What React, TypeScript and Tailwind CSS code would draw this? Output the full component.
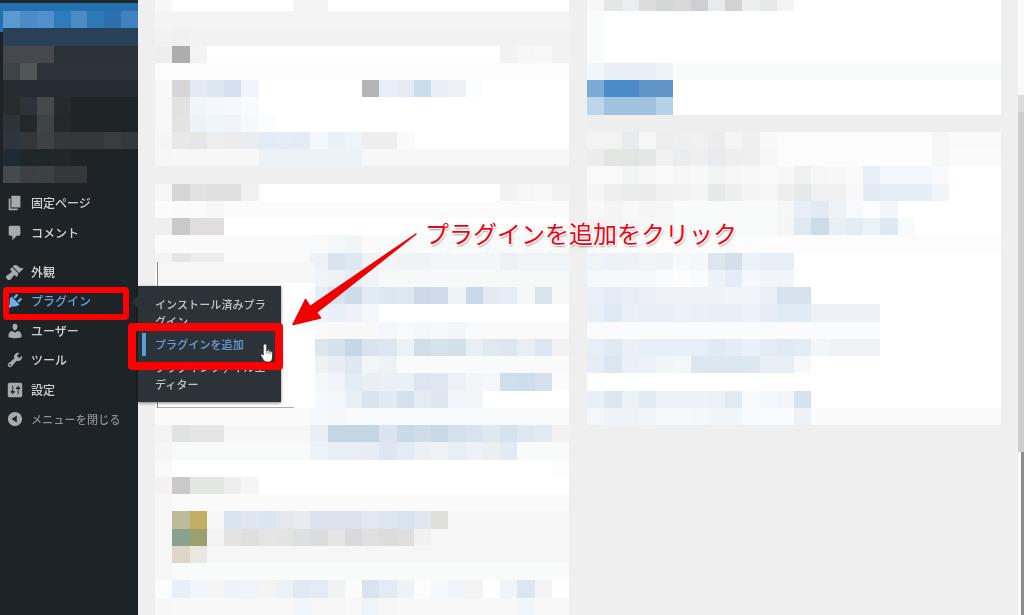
const sideTop: { cells: string[]; fill: string }[] = [
  { cells: ["#5b9ad0", "#4a8cc8", "#5090cc", "#2d7dbd", "#4c8cc4", "#2f78b6", "#2a70b0", "#3f82bf"], fill: "#2271b1" },
  { cells: [], fill: "#2a4056" },
  { cells: ["#45494e", "#45494e", "#45494e"], fill: "#2c3338" },
  { cells: ["#3d4447", "#505557"], fill: "#2d3439" },
  { cells: [], fill: "#252c32" },
  { cells: ["#282c2e", "#2d3339", "#45494b", "#262a2c"], fill: "#1f2427" },
  { cells: ["#2c3339", "#23282a", "#3e4446", "#26292b"], fill: "#1f2427" },
  { cells: ["#2e353c", "#33373a", "#3f4144", "#34383b", "#34383b", "#34383b", "#3a3d40", "#35393c"], fill: "#1d2327" },
  { cells: ["#1f2a33", "#202629", "#202629", "#202629"], fill: "#1d2327" },
  { cells: ["#454a4f", "#3c3f43", "#3c4143", "#34383b", "#34383b"], fill: "#1d2327" },
];

const leftRows: { cells: string[]; fill: string }[] = [
  { cells: ["#f5f8f6", "#fff", "#fff", "#fff", "#fff", "#fff", "#fff", "#fff", "#f4f4f4", "#f4f4f4"], fill: "#fff" },
  { cells: [], fill: "#f4f4f4" },
  { cells: ["#f2f2f2", "#f0f0f0"], fill: "#f2f2f2" },
  { cells: ["#eeeeee", "#adadad", "#f3f3f3", ...Array(17).fill("#fff"), "#f2f2f2", "#f6f6f6", "#f8f8f8", "#f2f2f2"], fill: "#fff" },
  { cells: [], fill: "#fcfcfc" },
  { cells: ["#f8f8f8", "#d5d5d5", "#e2ebf4", "#dce7f1", "#d3e0ee", "#f0f4fa", "#fff", "#fff", "#fff", "#fff", "#fff", "#fff", "#b4b4b6", "#e9eef6", "#e4ebf4", "#cddcea", "#e8eff6", "#eef1f6", "#fbfcfd"], fill: "#fff" },
  { cells: ["#f8f8f8", "#e2e2e2", "#eff5f9", "#f4f8fc", "#f6f9fc", "#f8fafc"], fill: "#fff" },
  { cells: ["#f8f8f8", "#e3e3e3", "#edf2f8", "#eff5f8", "#f0f4f9", "#f5f8fc", "#fbfcfe"], fill: "#fff" },
  { cells: ["#f5f5f5", "#e8e8e8", "#e6e6e6", "#eeeeee", "#ececec", "#ebecef", "#e3ebf4", "#e5ecf5", "#e5ebf4", "#f4f8fc", "#ebeff6", "#f0f3f8", "#eeeeee", "#eeeeee", "#fafafa"], fill: "#fff" },
  { cells: ["#f6f6f6", "#f7f7f7", "#f7f7f7", "#f7f7f7", "#f7f7f7", "#f7f7f7", "#ecf2f6", "#ecf2f6", "#ecf2f6", "#ecf2f6", "#ecf2f6", "#ecf2f6"], fill: "#f7f7f7" },
  { cells: [], fill: "#efefef" },
  { cells: ["#f6f6f6", "#d6d6d6", "#e2e2e2", "#e0e0e0", "#e0e0e0", "#f0f0f0", ...Array(14).fill("#fff"), "#f2f2f2", "#f6f6f6", "#f8f8f8", "#f2f2f2"], fill: "#fff" },
  { cells: ["#fbfbfb", "#f9fbfa", "#fbfbfb", "#f6f6f6"], fill: "#fbfbfb" },
  { cells: ["#f1eeef", "#c9c9c9", "#dfdddd", "#dfdddd"], fill: "#fff" },
  { cells: ["#fafafa", "#fafafa", "#fafafa", "#fafafa", "#fafafa", "#fafafa", "#fafafa", "#fafafa", "#fafafa", "#f8f9fa", "#f5f8fa", "#f1f5f9"], fill: "#f9fafa" },
  { cells: ["#f3f3f3", "#e5e5e5", "#ececec", "#ececec", "#fafafa", "#fafafa", "#fafafa", "#fafafa", "#fafafa", "#eef2f5", "#d9e4ee", "#dfe7f0", "#eef2f6", "#f2f5f8", "#eef3f6", "#eef3f6", "#f3f6f8", "#f3f6f8", "#f3f6f8", "#f3f6f8", "#ecf1f5"], fill: "#f1f4f7" },
  { cells: [...Array(9).fill("#fff"), "#f1f4f7", "#eef2f7", "#e8eef5", "#f0f4f8"], fill: "#f7f9f9" },
  { cells: [...Array(9).fill("#fff"), "#e6edf4", "#d9e4ee", "#cedcea", "#e2eaf3", "#dde7f1", "#dfe8f1", "#ccdae8", "#cedbe9", "#edf3f7", "#c8d9e9", "#e2eaf3", "#e6edf5", "#f4f7fa", "#d8e3ee", "#f8f8f8"], fill: "#fff" },
  { cells: [...Array(9).fill("#fff"), "#eef3f8", "#e9eff7", "#eef2f8", "#f5f7fb"], fill: "#fff" },
  { cells: [...Array(9).fill("#fff"), "#fafafa", "#f8f8f8", "#f8f8f8", "#f8f8f8", "#f4f7fa", "#f7f9fb", "#f5f6f8", "#f7f8f9", "#f3f6f9", "#f9fafb"], fill: "#fafafa" },
  { cells: [...Array(9).fill("#fff"), "#dfe5ec", "#d6e1ec", "#c5d6e7", "#d9e3ee", "#dde6ef", "#ecf1f5", "#d0dee9", "#d6e2ec", "#d3dfea", "#e9eef2", "#e1e8f0", "#dde6ef", "#e9eef5", "#dde6f0", "#f2f2f2"], fill: "#fff" },
  { cells: [...Array(9).fill("#fff"), "#eef1f4", "#e8edf3", "#dfe8f0", "#f2f6f7", "#edf2f7"], fill: "#f9fafa" },
  { cells: [...Array(9).fill("#fff"), "#f4f8fb", "#f0f4f8", "#e3ebf3", "#e9eff5", "#eaf0f5", "#eaf0f5", "#dde6f0", "#dfe7f0", "#edf1f6", "#f3f5f9", "#f4f6f9", "#cfdeeb", "#cedded", "#d5e1ed", "#fbfbfb"], fill: "#fff" },
  { cells: [...Array(9).fill("#fff"), "#f6f9fc", "#f3f6fa", "#e8eff5", "#d8e4ee", "#e1eaf2", "#d5e1ed", "#e4ebf3", "#dee7f0", "#f2f5f9", "#f3f5f8"], fill: "#fff" },
  { cells: ["#fafafa", "#fafafa", "#fafafa", "#fafafa", "#fafafa", "#fafafa", "#fafafa", "#fafafa", "#fafafa", "#f6f8f9", "#f5f7f9"], fill: "#f9fafb" },
  { cells: ["#f3f3f3", "#e1e2e3", "#e5e5e5", "#e5e5e5", "#f7f7f7", "#f7f7f7", "#f7f7f7", "#f7f7f7", "#f7f7f7", "#e9eff3", "#c4d5e4", "#c4d5e4", "#c4d5e4", "#d9e4f0", "#c8d9e8", "#cfdde8", "#c7d8e7", "#d5e0ec", "#d7e3ee", "#dfe7ef", "#d8e2ee", "#dfe7f2", "#e3eaf1", "#f2f2f2"], fill: "#fff" },
  { cells: ["#f5f5f5", "#f8fafa", "#f8fafa", "#f8fafa", "#f8fafa", "#f8fafa", "#f8fafa", "#f8fafa", "#f8fafa", "#eef3f7", "#e8eef3", "#e9eef3", "#e8edf3", "#dde6f2", "#e4ebf4", "#ecf0f5", "#f0f2f5", "#e8eef6", "#edf1f5", "#ebeff2", "#e2eaf3"], fill: "#f9fafa" },
  { cells: ["#f8faf9", ...Array(22).fill("#fff"), "#fcfcfc"], fill: "#fff" },
  { cells: ["#f3f1f1", "#c9c9ca", "#e4e6e4", "#e4e6e4", "#eeeeee", "#f5f5f5"], fill: "#fff" },
  { cells: ["#f6f6f6"], fill: "#fafafa" },
  { cells: ["#f6f6f6", "#bcbb9a", "#c1b064", "#f6f6f6", "#d7e3ee", "#dfe6f1", "#dbe5f1", "#e3e8ec", "#e8ebef", "#dae3ee", "#dae3ee", "#dae3ee", "#e2e8f2", "#dde5f0", "#d7e3ee", "#e0e7ee", "#dfe0da"], fill: "#f6f6f6" },
  { cells: ["#f6f6f6", "#8aa18f", "#9da06e", "#f3f3f3", "#e3e4e2", "#dfdfe0", "#e3e4e3", "#e3e4e2", "#dedfe0", "#dcdcdd", "#e5e5e5", "#dadadc", "#e0e0e1", "#dcdcdd", "#dedede", "#f1f1f1"], fill: "#f6f6f6" },
  { cells: ["#f6f6f6", "#dfd5c9", "#e9e8e3"], fill: "#f6f6f6" },
  { cells: ["#f6f6f6"], fill: "#f9fafa" },
  { cells: ["#fbfcfc", "#e9eef8", "#f2f5fa", "#f5f5f5", "#eff3f7", "#f0f4f9", "#f4f4f4", "#ecf1f5", "#e1e9f2", "#e4ebf5", "#f1f3f3", "#fbfbfb", "#d9e4ef", "#e3ebf5", "#edf2f4", "#fcfcfc", "#f6f9fb", "#f1f4f8", "#f3f3f3", "#fefefe", "#f0f4f9", "#dce6f0", "#f4f4f4", "#fefefe"], fill: "#fff" },
  { cells: ["#f7f7f7", "#f8f8f8", "#f8f8f8", "#f8f8f8", "#f8f8f8", "#f8f8f8", "#f8f8f8", "#f8f8f8", "#f2f6fa", "#f6f6f6", "#f6f6f6", "#f8f8f8", "#eff4f8", "#f6f6f6", "#f8f8f8", "#f8f8f8", "#f8f8f8", "#f8f8f8", "#f8f8f8", "#f8f8f8", "#f8f8f8", "#f1f6fa"], fill: "#f8f8f8" },
];

const rightRows: { cells: string[]; fill: string }[] = [
  { cells: ["#f7f7f7", "#e5e7e6", "#ecedee", "#dcdcdc", "#d4d6d6", "#d8d8d8", "#cdcfd0", "#e9eaeb", "#d3d3d3", "#edeeef", "#e6e8e7", "#f3f3f3"], fill: "#fff" },
  { cells: ["#fafcfb"], fill: "#fff" },
  { cells: ["#fafcfb"], fill: "#fff" },
  { cells: ["#fafcfb"], fill: "#fff" },
  { cells: ["#f2f6fa", "#e9eff4", "#e9eff4", "#e9eff4", "#eff3f7"], fill: "#f9fafa" },
  { cells: ["#7aaad6", "#4a8cc8", "#4a8cc8", "#5f95c8", "#5f95c8"], fill: "#fff" },
  { cells: ["#bdd6ec", "#a0c2de", "#a0c2de", "#a0c2de", "#b3d1e8"], fill: "#fff" },
  { cells: [], fill: "#eeeeee" },
  { cells: ["#f3f3f3", "#f3f3f3", "#e9eaec", "#f6f6f6", "#ededed", "#efefef", "#f0f0f0", "#ececec", "#f5f5f5", "#efefef", "#f8f8f8", ...Array(9).fill("#fcfcfc"), "#f6f6f6"], fill: "#f9f9f9" },
  { cells: ["#ececec", "#e3e5e3", "#e3e5e3", "#e5e6e6", "#f0f0f0", "#eaecee", "#efefef", "#eaebee", "#eeeeee", "#efefef", "#f7f7f7", ...Array(9).fill("#fcfcfc"), "#f6f6f6"], fill: "#fafafa" },
  { cells: ["#f9f9f9", "#f9f9f9", "#f3f5f4", "#f6f6f6", "#fafafa", "#f6f6f6", "#f8f8f8", "#f2f4f3", "#f6f6f6", "#f8f8f8", "#fafafa", "#f7f7f7", "#eff1f0", "#f6f6f6", "#f7f7f7", "#f9f9f9", "#e9eff8", "#f3f7fb", "#f3f7fb", "#f3f7fb", "#f8fafc"], fill: "#fff" },
  { cells: ["#f5f5f5", "#efefef", "#eaecee", "#ebebeb", "#f1f1f1", "#f2f2f2", "#f5f5f5", "#e6e8ea", "#eeeeee", "#f4f4f4", "#f6f6f6", "#eeeeee", "#e6e8ea", "#f0f0f0", "#f0f0f0", "#f8f8f8", "#e2ebf4", "#e5edf6", "#e5edf6", "#e5edf6", "#f0f4f9"], fill: "#fff" },
  { cells: ["#f8f8f8", "#f3f5f4", "#f8f8f8", "#f5f5f5", "#f6f6f6", "#f9fafa", "#f9fafa", "#f9fafa", "#f9fafa", "#f9fafa", "#f9fafa", "#f6f6f6", "#e8eef7", "#e2ebf3", "#eef3f8", "#f7f9fc", "#fcfcfc", "#f2f6fa"], fill: "#fff" },
  { cells: ["#f4f4f4", "#f3f3f3", "#f6f6f6", "#f6f6f6", "#f6f6f6", "#f9fafa", "#f9fafa", "#f9fafa", "#f9fafa", "#f9fafa", "#f9fafa", "#f5f5f5", "#e0e8f1", "#ccdbe8", "#e9eff5", "#e3ebf3", "#edf2f7", "#dde8f2", "#f8fafc"], fill: "#fff" },
  { cells: [], fill: "#fcfcfd" },
  { cells: ["#eff4f7", "#ecf1f7", "#edf2f6", "#f1f4f7", "#f0f3f6", "#f6f8fa", "#f4f7f8", "#dce6ee", "#d3e0eb", "#ecf1f7", "#e8eef6", "#e8eef6"], fill: "#fff" },
  { cells: ["#f6f9fc", "#f6f9fb", "#f6f9fb", "#f6f9fb", "#fafbfd", "#fdfdfe", "#fafbfd", "#edf2f8", "#e6ecf5", "#f4f7fb", "#f1f5f9", "#f1f4f8"], fill: "#fff" },
  { cells: ["#eaf0f7", "#e3ebf4", "#e8eef5", "#ecf0f6", "#eff2f7", "#eff2f7", "#eff2f7", "#eff2f7", "#f1f4f8", "#f0f3f8", "#ebf0f8", "#d6e2ee", "#d6e2ee"], fill: "#fff" },
  { cells: ["#e8eff7", "#dfe9f3", "#ebf0f7", "#e8eef6", "#e8eef6", "#ecf1f7", "#ebf0f7", "#e8eff6", "#e9eff6", "#edf1f8", "#e6edf5", "#e1ebf4", "#e1ebf4", "#eef2f7", "#eef2f7", "#eef2f7", "#eef2f7"], fill: "#fff" },
  { cells: Array(17).fill("#f9fbfd"), fill: "#fff" },
  { cells: ["#e8eef6", "#e1e9f3", "#ebf0f7", "#e8eef6", "#e8eef6", "#e8eef6", "#e7eef7", "#e1e9f2", "#e5ecf3", "#e9f0f7", "#e4ebf3", "#e1e9f3", "#e3ebf3", "#f1f6f8", "#eff3f7", "#eff2f6", "#eff2f6"], fill: "#fff" },
  { cells: ["#e6edf4", "#dce6f1", "#eaf0f7", "#eef2f8", "#f0f4f8", "#f3f7f8", "#dde7f0", "#dde7f0", "#dde7f0", "#dde7f0", "#e9eef5", "#e8eef6", "#f6f9fb"], fill: "#fff" },
  { cells: [], fill: "#fff" },
  { cells: ["#e9eff6", "#dce7f1", "#ecf1f7", "#e2ebf3", "#edf1f7", "#eef2f7", "#eef2f7", "#ecf1f6", "#e2ebf1", "#f8fafc", "#f4f7fb", "#f2f5f9", "#d6e2ef"], fill: "#fff" },
  { cells: ["#f4f6f9", "#eff3f8", "#eff3f8", "#f1f5f8", "#f7f8fa", "#f7f8fa", "#f6f7f9", "#f2f5f8", "#f2f5f8", "#f9fafc", "#fafbfd", "#fafbfd", "#eef2f7"], fill: "#fafafb" },
];

function Mosaic({ rows, cols }: { rows: { cells: string[]; fill: string }[]; cols: number }) {
  return (
    <div className="flex flex-col">
      {rows.map((row, i) => (
        <div key={i} className="flex h-[17.25px]">
          {Array.from({ length: cols }).map((_, c) => (
            <div key={c} className="w-[17.25px] h-full" style={{ background: row.cells[c] ?? row.fill }} />
          ))}
        </div>
      ))}
    </div>
  );
}

const icons = {
  pages: "M6 15V2h10v13H6zm-1 1h8v2H3V5h2v11z",
  comments: "M5 2h9c1.1 0 2 .9 2 2v7c0 1.1-.9 2-2 2h-2l-5 5v-5H5c-1.1 0-2-.9-2-2V4c0-1.1.9-2 2-2z",
  appearance: "M14.48 11.06L7.41 3.99l1.5-1.5c.5-.56 2.3-.47 3.51.32 1.21.8 1.43 1.28 2.91 2.1 1.18.64 2.45 1.26 4.45.85zm-.71.71L6.7 4.7 4.93 6.47c-.39.39-.39 1.02 0 1.41l1.06 1.06c.39.39.39 1.03 0 1.42-.6.6-1.43 1.11-2.21 1.69-.35.26-.7.53-1.01.84C1.43 13.23 0 14.64 0 15.71c0 1.07 2.1 3.29 3.18 3.29 1.07 0 2.48-1.43 3.02-1.79.31-.31.58-.66.84-1.01.58-.78 1.09-1.61 1.69-2.21.39-.39 1.03-.39 1.42 0l1.06 1.06c.39.39 1.02.39 1.41 0z",
  plugins: "M13.11 4.36L9.87 7.6 8 5.73l3.24-3.24c.35-.34 1.05-.2 1.56.32.52.51.66 1.21.31 1.55zm-8 1.77l.91-1.12 9.01 9.01-1.19.84c-.71.71-2.63 1.16-3.82 1.16H6.14L4.9 17.26c-.59.59-1.54.59-2.12 0-.59-.58-.59-1.53 0-2.12l1.24-1.24v-3.88c0-1.13.4-3.19 1.09-3.89zm7.26 3.97l3.24-3.24c.34-.35 1.04-.21 1.55.31.52.51.66 1.21.31 1.55l-3.24 3.25z",
  users: "M10 9.25c-2.27 0-2.73-3.44-2.73-3.44C7 4.02 7.82 2 9.97 2c2.16 0 2.98 2.02 2.71 3.81 0 0-.41 3.44-2.68 3.44zm0 2.57L12.72 10c2.39 0 4.52 2.33 4.52 4.53v2.49s-3.65 1.13-7.24 1.13c-3.65 0-7.24-1.13-7.24-1.13v-2.49c0-2.25 1.94-4.48 4.47-4.48z",
  tools: "M16.68 9.77c-1.34 1.34-3.3 1.67-4.95.99l-5.41 6.52c-.99.99-2.59.99-3.58 0s-.99-2.59 0-3.57l6.52-5.42c-.68-1.65-.35-3.61.99-4.95 1.28-1.28 3.12-1.62 4.72-1.06l-2.89 2.89 2.82 2.82 2.86-2.87c.53 1.58.18 3.39-1.08 4.65zM3.81 16.21c.4.39 1.04.39 1.43 0 .4-.4.4-1.04 0-1.43-.39-.4-1.03-.4-1.43 0-.39.39-.39 1.03 0 1.43z",
  settings: "M18 16V4c0-1.1-.9-2-2-2H4c-1.1 0-2 .9-2 2v12c0 1.1.9 2 2 2h12c1.1 0 2-.9 2-2zM8 11h1c.55 0 1 .45 1 1s-.45 1-1 1H8v1.5c0 .28-.22.5-.5.5s-.5-.22-.5-.5V13H6c-.55 0-1-.45-1-1s.45-1 1-1h1V5.5c0-.28.22-.5.5-.5s.5.22.5.5V11zm5-2h-1c-.55 0-1-.45-1-1s.45-1 1-1h1V5.5c0-.28.22-.5.5-.5s.5.22.5.5V7h1c.55 0 1 .45 1 1s-.45 1-1 1h-1v5.5c0 .28-.22.5-.5.5s-.5-.22-.5-.5V9z",
  collapse: "M10 2.16c4.33 0 7.84 3.51 7.84 7.84s-3.51 7.84-7.84 7.84S2.16 14.33 2.16 10 5.71 2.16 10 2.16zm2 11.72V6.12L6.18 9.97z",
};

function MenuItem({ icon, label, active, muted }: { icon: string; label: string; active?: boolean; muted?: boolean }) {
  return (
    <div className="flex items-center h-[29.4px] pl-[6px] gap-[7px] blur-[0.35px]">
      <svg viewBox="0 0 20 20" className="w-[18px] h-[18px] shrink-0" fill={active ? "#72aee6" : "#a7aaad"}>
        <path d={icon} />
      </svg>
      <span
        className={
          muted
            ? "text-[11px] tracking-[0.2px] text-[#8c8f94] font-medium whitespace-nowrap"
            : active
              ? "text-[12px] text-[#689fd6] font-medium whitespace-nowrap"
              : "text-[12px] text-[#d0d1d3] font-medium whitespace-nowrap"
        }
      >
        {label}
      </span>
    </div>
  );
}

export default function App() {
  return (
    <div className="relative flex w-[1024px] h-[615px] overflow-hidden bg-[#efefef] [font-family:'Noto_Sans_CJK_JP',sans-serif]">
      <aside className="w-[138px] shrink-0 bg-[#1d2327] flex flex-col">
        <div className="h-[3px] bg-[#23282d]" />
        <div className="h-[8px] bg-[#2271b1]" />
        <div className="pl-[3px] h-[172px] overflow-hidden">
          <Mosaic rows={sideTop} cols={8} />
        </div>
        <div className="pt-[5.5px] flex flex-col">
          <MenuItem icon={icons.pages} label="固定ページ" />
          <MenuItem icon={icons.comments} label="コメント" />
          <div className="h-[10px]" />
          <MenuItem icon={icons.appearance} label="外観" />
          <MenuItem icon={icons.plugins} label="プラグイン" active />
          <MenuItem icon={icons.users} label="ユーザー" />
          <MenuItem icon={icons.tools} label="ツール" />
          <MenuItem icon={icons.settings} label="設定" />
          <MenuItem icon={icons.collapse} label="メニューを閉じる" muted />
        </div>
      </aside>
      <div className="absolute left-0 top-[3px] w-[3px] h-[29px] bg-[#2271b1]" />

      <main className="flex-1 flex pl-[17px] gap-[18px] -mt-[6.25px] items-start">
        <Mosaic rows={leftRows} cols={24} />
        <Mosaic rows={rightRows} cols={24} />
      </main>

      {/* page scrollbar */}
      <div className="w-[6px] shrink-0 flex flex-col">
        <div className="h-[95px] bg-[#fafafa]" />
        <div className="h-[17px] bg-[#dcdcdc]" />
        <div className="h-[340px] bg-[#cdcdcd]" />
        <div className="flex-1 flex">
          <div className="w-[3px] bg-[#fbfbfb]" />
          <div className="w-[3px] bg-[#8c8c8c]" />
        </div>
      </div>

      {/* white box that sits behind the flyout */}
      <div className="absolute left-[157px] top-[262px] w-[158px] h-[146px] bg-white border-l border-[#8a8a8a]">
        <div className="h-[21px] bg-[#f6f6f6]" />
        <div className="absolute left-0 bottom-0 w-[136px] h-px bg-[#aaaaaa]" />
      </div>

      {/* flyout submenu */}
      <div className="absolute left-[138px] top-[286px] w-[143px] h-[116px] bg-[#2c3338] shadow-[0_1px_3px_rgba(0,0,0,0.5)] pt-[6.5px] text-[11px] leading-[17px] font-medium">
        <div className="absolute -left-[6px] top-[10px] w-0 h-0 border-y-[6px] border-y-transparent border-r-[6px] border-r-[#2c3338]" />
        <div className="py-[3px] pl-[17px] pr-[8px] text-[#c3c4c7] tracking-[0.1px] blur-[0.35px]">インストール済みプラグイン</div>
        <div className="ml-[4px] border-l-[4px] border-[#5b9dd9] py-[3px] pl-[9px] text-[#689fd6] tracking-[0.1px]">プラグインを追加</div>
        <div className="py-[3px] pl-[17px] pr-[8px] text-[#c3c4c7] tracking-[0.1px] blur-[0.35px]">プラグインファイルエディター</div>
      </div>

      {/* annotations */}
      <div className="absolute left-[3px] top-[287px] w-[126px] h-[33px] border-[6.5px] border-[#ff0000] rounded-[4px]" />
      <div className="absolute left-[128px] top-[323px] w-[155px] h-[47px] border-[8px] border-[#ff0000] rounded-[4px]" />

      <svg className="absolute left-[260px] top-[343px] w-[14px] h-[20px]" viewBox="0 0 14 20">
        <path
          d="M5 1C6 1 6.8 1.7 6.8 2.7V8h.4V7C7.2 5.8 9 5.8 9 7v1.3C9 7.2 10.8 7.2 10.8 8.4V9c0-1 1.8-1 1.8.2V14c0 3-1.6 5-4.1 5H7c-2 0-3-1-4-2.5L.8 12.5c-.6-1.2.8-2.1 1.7-1.2l.7.9V2.7C3.2 1.7 4 1 5 1z"
          fill="#fff"
          stroke="#222"
          strokeWidth="0.8"
        />
        <path d="M6.8 8v3M9 8.3V11M10.8 9v2" stroke="#444" strokeWidth="0.6" fill="none" />
      </svg>

      <svg className="absolute left-[280px] top-[225px] w-[145px] h-[110px]" viewBox="280 225 145 110">
        <path
          d="M416 234L310 306.5 305.5 299.5 293 324.5 320.5 318 316.5 312.5Z"
          fill="#f00000"
          stroke="#f00000"
          strokeWidth="1.5"
          strokeLinejoin="round"
        />
      </svg>

      <div className="absolute left-[425px] top-[216px] text-[24px] leading-[34px] font-normal text-[#f5000f] whitespace-nowrap [text-shadow:1px_0_0_#fff,-1px_0_0_#fff,0_1px_0_#fff,0_-1px_0_#fff,1px_1px_0_#fff,-1px_-1px_0_#fff,1px_-1px_0_#fff,-1px_1px_0_#fff,1px_2px_2px_rgba(0,0,0,0.4)]">
        プラグインを追加をクリック
      </div>
    </div>
  );
}
